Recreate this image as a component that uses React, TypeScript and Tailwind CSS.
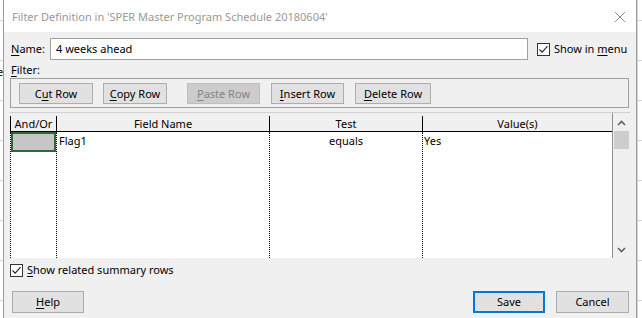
import React from "react";

const font = "font-['Segoe_UI','Noto_Sans',sans-serif]";
const fs = "text-[11px]";

function Btn({ children, w, ml, disabled }: { children: React.ReactNode; w: string; ml?: string; disabled?: boolean }) {
  return (
    <div
      className={`${w} ${ml ?? ""} h-[21px] flex items-center justify-center ${fs} leading-none ${
        disabled ? "bg-[#cccccc] border border-[#bfbfbf] text-[#838383]" : "bg-[#e1e1e1] border border-[#adadad] text-black"
      }`}
    >
      {children}
    </div>
  );
}

function Check() {
  return (
    <div className="w-[13px] h-[13px] border border-[#333333] bg-white flex items-center justify-center shrink-0">
      <svg width="11" height="11" viewBox="0 0 11 11">
        <path d="M1.5 5.5 L4.2 8.2 L9.5 2.2" fill="none" stroke="#222" strokeWidth="1.1" />
      </svg>
    </div>
  );
}

function Strip() {
  return (
    <div className="w-full flex flex-col">
      <div className="h-[21px] border-b border-[#d4d4d4] shrink-0" />
      {[0, 1, 2, 3, 4, 5, 6].map((i) => (
        <div key={i} className="h-[40px] border-b border-[#d4d4d4] shrink-0" />
      ))}
    </div>
  );
}

export default function App() {
  const dot = "border-l border-dotted border-black";
  const u = "underline underline-offset-2";
  return (
    <div className={`w-[642px] h-[318px] bg-white flex overflow-hidden ${font} text-black`}>
      {/* left background strip */}
      <div className="w-[3px] shrink-0 relative overflow-hidden">
        <Strip />
        <div className="absolute left-[-3px] top-[64px] text-[11px] leading-[16px]">e</div>
      </div>
      {/* dialog */}
      <div className="w-[634px] shrink-0 border-x border-[#9c9c9c] flex flex-col bg-[#f0f0f0]">
        <div className="h-[32px] bg-white flex items-center justify-between pl-[8px] pr-[10px] pt-[2px]">
          <span className="text-[11px] text-[#999999]">Filter Definition in 'SPER Master Program Schedule 20180604'</span>
          <svg width="12" height="12" viewBox="0 0 12 12">
            <path d="M1 1 L11 11 M11 1 L1 11" stroke="#8a8a8a" strokeWidth="1" />
          </svg>
        </div>
        {/* name row */}
        <div className="flex items-center mt-[6px] h-[22px]">
          <span className={`ml-[7px] w-[39px] ${fs}`}><span className={u}>N</span>ame:</span>
          <div className={`w-[478px] h-[22px] bg-white border border-[#a0a0a0] flex items-center pl-[5px] ${fs}`}>4 weeks ahead</div>
          <div className="ml-[9px] flex items-center gap-[4px]">
            <Check />
            <span className={fs}>Show in <span className={u}>m</span>enu</span>
          </div>
        </div>
        <div className={`h-[16px] mt-[2px] ml-[7px] ${fs} leading-[16px]`}><span className={u}>F</span>ilter:</div>
        {/* button group */}
        <div className="ml-[6px] w-[619px] h-[30px] border border-[#a0a0a0] flex items-center pl-[8px]">
          <Btn w="w-[74px]"><span>C<span className={u}>u</span>t Row</span></Btn>
          <Btn w="w-[64px]" ml="ml-[10px]"><span><span className={u}>C</span>opy Row</span></Btn>
          <Btn w="w-[73px]" ml="ml-[20px]" disabled><span><span className={u}>P</span>aste Row</span></Btn>
          <Btn w="w-[73px]" ml="ml-[11px]"><span><span className={u}>I</span>nsert Row</span></Btn>
          <Btn w="w-[76px]" ml="ml-[11px]"><span><span className={u}>D</span>elete Row</span></Btn>
        </div>
        {/* grid */}
        <div className="ml-[6px] mt-[4px] w-[620px] h-[146px] flex border-t border-[#d0d0d0] bg-white">
          <div className="flex-1 flex flex-col">
            <div className={`h-[19px] flex bg-[#f0f0f0] border-b border-black ${fs} leading-[16px] pt-[3px]`}>
              <div className="w-[46px] border-l border-black text-center">And/Or</div>
              <div className="w-[213px] border-l border-black text-center">Field Name</div>
              <div className="w-[153px] border-l border-black text-center">Test</div>
              <div className="flex-1 border-l border-black text-center">Value(s)</div>
            </div>
            <div className={`flex-1 flex ${fs}`}>
              <div className={`w-[46px] ${dot}`}>
                <div className="h-[20px] w-[45px] bg-[#c6c6c6] border-2 border-[#2f6a36]" />
              </div>
              <div className={`w-[213px] ${dot} pl-[2px] leading-[18px]`}>Flag1</div>
              <div className={`w-[153px] ${dot} text-center leading-[18px]`}>equals</div>
              <div className={`flex-1 ${dot} pl-[1px] leading-[18px]`}>Yes</div>
            </div>
          </div>
          {/* scrollbar */}
          <div className="w-[18px] border-l border-[#8f8f8f] bg-[#f0f0f0] flex flex-col items-center">
            <svg className="mt-[7px]" width="9" height="6" viewBox="0 0 9 6">
              <path d="M1 5 L4.5 1.5 L8 5" fill="none" stroke="#606060" strokeWidth="1.6" />
            </svg>
            <div className="mt-[5px] w-[15px] h-[18px] bg-[#cdcdcd]" />
            <div className="flex-1" />
            <svg className="mb-[5px]" width="9" height="6" viewBox="0 0 9 6">
              <path d="M1 1 L4.5 4.5 L8 1" fill="none" stroke="#606060" strokeWidth="1.6" />
            </svg>
          </div>
        </div>
        {/* summary checkbox */}
        <div className="mt-[6px] ml-[6px] h-[13px] flex items-center gap-[4px]">
          <Check />
          <span className={fs}><span className={u}>S</span>how related summary rows</span>
        </div>
        {/* bottom buttons */}
        <div className="mt-[14px] flex items-center">
          <div className={`ml-[8px] w-[72px] h-[22px] bg-[#e1e1e1] border border-[#adadad] flex items-center justify-center ${fs}`}>
            <span><span className={u}>H</span>elp</span>
          </div>
          <div className="flex-1" />
          <div className={`w-[72px] h-[22px] bg-[#e1e1e1] border-2 border-[#0078d7] flex items-center justify-center ${fs}`}>Save</div>
          <div className={`ml-[11px] mr-[7px] w-[73px] h-[22px] bg-[#e1e1e1] border border-[#adadad] flex items-center justify-center ${fs}`}>Cancel</div>
        </div>
      </div>
      {/* right background strip */}
      <div className="flex-1 overflow-hidden border-l border-[#d4d4d4]">
        <Strip />
      </div>
    </div>
  );
}
